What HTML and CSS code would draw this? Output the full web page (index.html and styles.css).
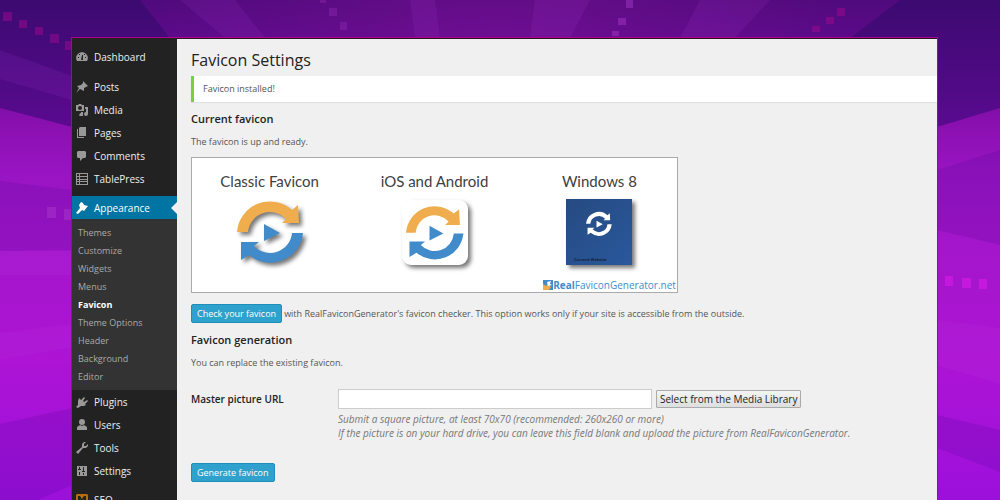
FILE: index.html
```html
<!DOCTYPE html>
<html lang="en">
<head>
<meta charset="utf-8">
<title>Favicon Settings</title>
<link rel="stylesheet" href="styles.css">
</head>
<body>
<svg class="defs" width="0" height="0" aria-hidden="true">
  <defs>
    <path id="arrow-top" d="M0 33A33 33 0 0 1 55 11L61 6L62 24H45L49 20A22 22 0 0 0 11 33Z"/>
    <path id="arrow-bottom" d="M66 34A33 33 0 0 1 12 56L4 61V43H22L17 47A22 22 0 0 0 55 34Z"/>
    <path id="arrow-play" d="M27 25L43 34L27 42Z"/>
  </defs>
</svg>
<svg class="backdrop" viewBox="0 0 1000 500" preserveAspectRatio="none" aria-hidden="true">
  <defs>
    <linearGradient id="base" x1="0" y1="0" x2="0" y2="1">
      <stop offset="0" stop-color="#500a7c"/>
      <stop offset=".08" stop-color="#5c0a8a"/>
      <stop offset=".25" stop-color="#8a10b0"/>
      <stop offset=".34" stop-color="#9814c2"/>
      <stop offset=".48" stop-color="#a316cb"/>
      <stop offset=".72" stop-color="#ad14d4"/>
      <stop offset="1" stop-color="#9c10dc"/>
    </linearGradient>
    <linearGradient id="corner" x1="0" y1="0" x2="0" y2="1">
      <stop offset="0" stop-color="#3c0a70"/>
      <stop offset="1" stop-color="#5a0a90"/>
    </linearGradient>
    <radialGradient id="mid" cx=".5" cy=".08" r=".35">
      <stop offset="0" stop-color="#80129a" stop-opacity=".5"/>
      <stop offset="1" stop-color="#80129a" stop-opacity="0"/>
    </radialGradient>
  </defs>
  <rect width="1000" height="500" fill="url(#base)"/>
  <rect width="1000" height="500" fill="url(#mid)"/>
  <path fill="url(#corner)" d="M0 0H140L170 38H72V127L0 108Z"/>
  <path fill="url(#corner)" d="M1000 0H900L850 38H937V127L1000 108Z"/>
  <g fill="#c850e8" fill-opacity=".1">
    <path d="M180 0H235L265 38H225Z"/>
    <path d="M410 0H435L440 38H415Z"/>
    <path d="M535 0H590L570 38H530Z"/>
    <path d="M700 0H770L735 38H680Z"/>
    <path d="M0 50L72 76V100L0 79Z"/>
    <path d="M0 333L72 324V347L0 360Z"/>
    <path d="M0 251H72V275H0Z"/>
    <path d="M937 320L1000 328V384L937 365Z"/>
  </g>
  <g fill="#300080" fill-opacity=".14">
    <path d="M0 181L72 190V250L0 251Z"/>
    <path d="M1000 150L937 170V230L1000 245Z"/>
    <path d="M937 415L1000 430V472L937 448Z"/>
    <path d="M0 424L72 408V485L38 500H0Z"/>
  </g>
  <g fill="#a00890" fill-opacity=".5">
    <path d="M3 12h9v9h-9zM19 20h8v8h-8zM35 27h8v8h-8zM50 34h9v9h-9zM65 41h6v9h-6z"/>
    <path d="M837 8h8v8h-8zM826 17h8v7h-8zM812 26h8v6h-8z"/>
  </g>
  <g fill="#b040d0" fill-opacity=".4">
    <path d="M320 0h6v3h-6zM329 8h8v8h-8zM340 22h7v8h-7z" opacity=".6"/>
    <path d="M626 0h7v8h-7zM618 18h8v7h-8zM612 31h7v5h-7z"/>
    <path d="M47 207h9v11h-9zM64 209h7v11h-7z"/>
  </g>
  <path fill="#d319e4" fill-opacity=".7" d="M945 276h8v10h-8zM962 278h9v10h-9zM979 279h8v10h-8z"/>
</svg>

<div class="window">
  <nav class="sidebar" aria-label="Admin menu">
    <ul class="menu menu-first">
      <li><a class="item" href="#"><svg class="icon" viewBox="0 0 12 12"><path fill-rule="evenodd" d="M1 10A6 6 0 0 1 1 4L3 2L6 1L9 2L11 4A6 6 0 0 1 11 10ZM5 9H7V4H6ZM2 6v1h1V6ZM9 6v1h1V6ZM3 3v1h1V3ZM8 3v1h1V3Z"/></svg>Dashboard</a></li>
    </ul>
    <ul class="menu">
      <li><a class="item" href="#"><svg class="icon" viewBox="0 0 12 12"><path d="M7 0L12 5L10 6L8 7L8 10L6 9L4 8L0 12L3 7L1 5L5 4L7 2Z"/></svg>Posts</a></li>
      <li><a class="item" href="#"><svg class="icon" viewBox="0 0 12 12"><path fill-rule="evenodd" d="M0 1H2L3 0H5L6 1H8V7H0ZM4 2A2 2 0 1 0 4 6A2 2 0 1 0 4 2ZM9 3H12V10A2 2 0 1 1 10 8V5H9ZM5 8H7V12A2 2 0 1 1 5 9Z"/></svg>Media</a></li>
      <li><a class="item" href="#"><svg class="icon" viewBox="0 0 12 12"><path d="M4 0H10V9H3V1ZM1 2H2V10H8V11H1Z"/></svg>Pages</a></li>
      <li><a class="item" href="#"><svg class="icon" viewBox="0 0 12 12"><path d="M2 1H9L10 2V7L9 8H7L4 11V8H2L1 7V2Z"/></svg>Comments</a></li>
      <li><a class="item" href="#"><svg class="icon" viewBox="0 0 12 12"><path fill-rule="evenodd" d="M0 0H12V12H0ZM1 1V3H3V1ZM4 1V3H11V1ZM1 4V6H3V4ZM4 4V6H11V4ZM1 7V8H3V7ZM4 7V8H11V7ZM1 9V11H3V9ZM4 9V11H11V9Z"/></svg>TablePress</a></li>
    </ul>
    <a class="item current" href="#"><svg class="icon" viewBox="0 0 12 12"><path d="M5 0L7 1L8 3L12 4L8 9L6 8L2 12L0 11L4 6L3 3Z"/></svg>Appearance</a>
    <ul class="submenu">
      <li><a href="#">Themes</a></li>
      <li><a href="#">Customize</a></li>
      <li><a href="#">Widgets</a></li>
      <li><a href="#">Menus</a></li>
      <li><a class="active" href="#">Favicon</a></li>
      <li><a href="#">Theme Options</a></li>
      <li><a href="#">Header</a></li>
      <li><a href="#">Background</a></li>
      <li><a href="#">Editor</a></li>
    </ul>
    <ul class="menu">
      <li><a class="item" href="#"><svg class="icon" viewBox="0 0 12 12"><path d="M3 2L5 4L8 1L9 2L7 5L8 6L11 4L12 5L9 8L10 9L8 10H5L2 12L0 11L2 9V5Z"/></svg>Plugins</a></li>
      <li><a class="item" href="#"><svg class="icon" viewBox="0 0 12 12"><path d="M6 0A3 3 0 1 1 6 6A3 3 0 1 1 6 0ZM1 8L4 6L6 7L8 6L11 8V11H1Z"/></svg>Users</a></li>
      <li><a class="item" href="#"><svg class="icon" viewBox="0 0 12 12"><path d="M8 0H10L8 2V4H10L12 2V4L10 6H7L2 12L0 10L6 5V2Z"/></svg>Tools</a></li>
      <li><a class="item" href="#"><svg class="icon" viewBox="0 0 12 12"><path fill-rule="evenodd" d="M1 1H11V11H1ZM3 2V4H2V5H5V4H4V2ZM7 2V6H6V7H9V6H8V2ZM3 7V10H4V7ZM7 8V10H8V8Z"/></svg>Settings</a></li>
    </ul>
    <ul class="menu">
      <li><a class="item" href="#"><svg class="icon seo" viewBox="0 0 12 12"><path fill-rule="evenodd" d="M1 0H11L12 1V12H0V1ZM2 2V10H4V5L6 8L8 5V10H10V2H8L6 5L4 2Z"/></svg>SEO</a></li>
    </ul>
  </nav>

  <main class="content">
    <h1>Favicon Settings</h1>
    <p class="notice">Favicon installed!</p>

    <h2>Current favicon</h2>
    <p class="text">The favicon is up and ready.</p>
    <section class="preview">
      <figure class="sample">
        <figcaption>Classic Favicon</figcaption>
        <svg class="art" viewBox="0 0 66 66"><g class="shadow"><use href="#arrow-top" class="orange"/><use href="#arrow-bottom" class="blue"/><use href="#arrow-play" class="blue"/></g></svg>
      </figure>
      <figure class="sample">
        <figcaption>iOS and Android</figcaption>
        <svg class="art" viewBox="0 0 66 66"><rect class="tile shadow" x="0" y="1" width="66" height="65" rx="9"/><g transform="translate(4 5) scale(.87)"><use href="#arrow-top" class="orange"/><use href="#arrow-bottom" class="blue"/><use href="#arrow-play" class="blue"/></g></svg>
      </figure>
      <figure class="sample">
        <figcaption>Windows 8</figcaption>
        <svg class="art" viewBox="0 0 66 66"><defs><linearGradient id="win" x2="1" y2="1"><stop stop-color="#264a80"/><stop offset="1" stop-color="#29589c"/></linearGradient></defs><rect class="shadow" width="66" height="66" fill="url(#win)"/><g transform="translate(20 12) scale(.39)" fill="#fff"><use href="#arrow-top"/><use href="#arrow-bottom"/><use href="#arrow-play"/></g><text class="tile-name" x="8" y="62">Current Website</text></svg>
      </figure>
      <p class="brand"><svg class="brand-mark" viewBox="0 0 10 10"><path fill="#428bca" d="M0 0H10V10H0Z"/><path fill="#f0ad4e" d="M0 4L3 6L5 4L8 7L6 10H0Z"/><path fill="#fff" d="M4 2L8 1L7 4L9 5L5 6Z"/></svg><b>Real</b>FaviconGenerator.net</p>
    </section>
    <p class="check"><button class="primary" type="button">Check your favicon</button><span>with RealFaviconGenerator's favicon checker. This option works only if your site is accessible from the outside.</span></p>

    <h2>Favicon generation</h2>
    <p class="text">You can replace the existing favicon.</p>
    <form class="form">
      <div class="row">
        <label for="url">Master picture URL</label>
        <div class="field">
          <div class="controls">
            <input id="url" type="text">
            <button class="secondary" type="button">Select from the Media Library</button>
          </div>
          <p class="hint">Submit a square picture, at least 70x70 (recommended: 260x260 or more)<br>If the picture is on your hard drive, you can leave this field blank and upload the picture from RealFaviconGenerator.</p>
        </div>
      </div>
      <button class="primary" type="submit">Generate favicon</button>
    </form>
  </main>
</div>
</body>
</html>
```
FILE: styles.css
```css
* { box-sizing: border-box; }

body {
  margin: 0;
  height: 100vh;
  overflow: hidden;
  padding: 37px 62px 0 71px;
  background: #54098a;
  font: 9px/14px "Open Sans", sans-serif;
  color: #555;
}

h1, h2, p, ul, figure { margin: 0; padding: 0; }
ul { list-style: none; }
a { color: inherit; text-decoration: none; }
button, input { font-family: inherit; }

.defs { position: absolute; }

.backdrop {
  position: absolute;
  inset: 0;
  width: 100%;
  height: 100%;
  z-index: -1;
}

.window {
  display: flex;
  min-height: 100%;
  border: 1px solid #b0008f;
  border-bottom: 0;
  background: #f0f0f0;
}

.sidebar {
  flex: none;
  width: 105px;
  background: #222;
  color: #eee;
}

.menu { padding-bottom: 6px; }
.menu-first { padding: 7px 0; }

.item {
  display: flex;
  align-items: center;
  gap: 6px;
  height: 23px;
  padding-left: 4px;
  font-size: 10px;
}

.icon { width: 12px; height: 12px; fill: #999; }
.icon.seo { fill: #b86e08; }

.current {
  position: relative;
  background: #0074a2;
  color: #fff;
}
.current .icon { fill: #fff; }
.current::after {
  content: "";
  position: absolute;
  right: 0;
  top: 6px;
  border: 6px solid transparent;
  border-left: 0;
  border-right-color: #f0f0f0;
}

.submenu {
  padding: 5px 0 4px 6px;
  background: #333;
  color: #aaa;
  line-height: 18px;
}
.submenu a { display: block; }
.submenu .active { color: #fff; font-weight: 700; }

.content {
  flex: 1;
  min-width: 0;
  padding: 10px 0 0 14px;
  border-top: 1px solid #2a1424;
}

h1 { font-size: 16px; line-height: 22px; font-weight: 400; color: #222; }
h2 { font-size: 11px; line-height: 16px; font-weight: 600; color: #222; margin-top: 9px; }

.notice {
  margin-top: 5px;
  padding: 6px 9px;
  border-left: 3px solid #7ad03a;
  background: #fff;
  box-shadow: 0 1px 1px #0001;
}

.text { margin-top: 8px; }

.preview {
  display: grid;
  grid-template-columns: repeat(3, 34%);
  justify-content: center;
  max-width: 487px;
  height: 136px;
  margin-top: 8px;
  border: 1px solid #aaa;
  background: #fff;
}
.sample { display: flex; flex-direction: column; align-items: center; }
figcaption { margin-top: 12px; font: 15px/22px Lato, sans-serif; color: #404040; }
.art { width: 66px; height: 66px; margin-top: 7px; overflow: visible; }
.shadow { filter: drop-shadow(3px 3px 2px #0008); }
.orange { fill: #f0ad4e; }
.blue { fill: #428bca; }
.tile { fill: #fff; }
.tile-name { font: 700 4px "Open Sans", sans-serif; fill: #172238; }

.brand {
  grid-column: 1 / -1;
  align-self: end;
  display: flex;
  justify-content: flex-end;
  align-items: center;
  padding-right: 6px;
  font-size: 10px;
  line-height: 14px;
  color: #428bca;
}
.brand-mark { width: 10px; height: 10px; }

.check { display: flex; align-items: center; gap: 2px; margin-top: 11px; }

.primary {
  height: 19px;
  padding: 0 5px;
  border: 1px solid #1f8fb9;
  border-radius: 2px;
  background: #2ea2cc;
  color: #fff;
  font-size: 9px;
  line-height: 14px;
}

.row { display: flex; margin-top: 19px; }
.row label { flex: none; width: 147px; padding-top: 3px; font-size: 10px; font-weight: 600; color: #222; }
.controls { display: flex; align-items: center; gap: 4px; }
.controls input { width: 314px; height: 20px; border: 1px solid #ccc; background: #fff; }
.secondary {
  height: 18px;
  padding: 0 3px;
  border: 1px solid #aaa;
  border-radius: 1px;
  background: linear-gradient(#f4f4f4, #dedede);
  color: #222;
  font-size: 10px;
  line-height: 14px;
}
.hint { margin-top: 3px; font-size: 10px; font-style: italic; color: #777; }
.form > .primary { margin-top: 23px; }
```
